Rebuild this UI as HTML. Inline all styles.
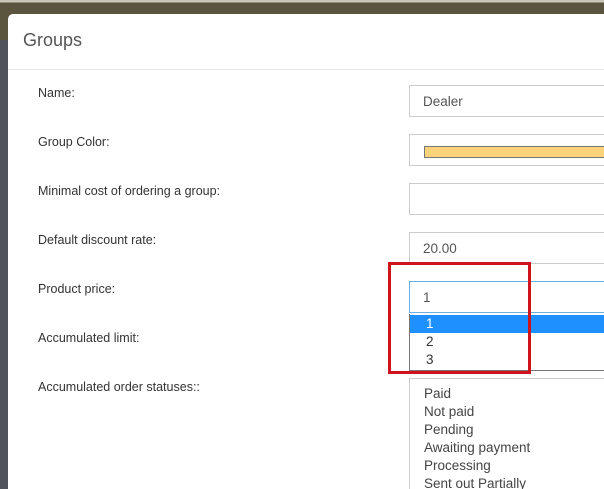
<!DOCTYPE html>
<html style="overflow:hidden;height:489px"><head><style>
body{margin:0;width:604px;height:489px;overflow:hidden;background:#50535a;font-family:"Liberation Sans",sans-serif;position:relative}
.top{position:absolute;left:0;top:0;width:604px;height:40px;background:linear-gradient(#c9c6b8 0,#c9c6b8 2px,#5b5540 3px,#5b5540 40px)}
.modal{position:absolute;left:8px;top:14px;width:596px;height:475px;background:#fff;border-radius:5px 0 0 0}
.title{position:absolute;left:23px;top:30px;font-size:18px;color:#555}
.hr{position:absolute;left:8px;top:69px;width:596px;height:1px;background:#e5e5e5}
.lbl{position:absolute;left:38px;font-size:12.5px;color:#333}
.in{position:absolute;left:409px;width:200px;height:32px;border:1px solid #ccc;box-sizing:border-box;font-size:13.5px;color:#555;padding:8px 13px}
.opt{position:absolute;left:410px;width:200px;height:18px;font-size:13.5px;color:#333;padding-left:16px;box-sizing:border-box;line-height:18px}
</style></head><body>
<div class="top"></div>
<div class="modal"></div>
<div class="title">Groups</div>
<div class="hr"></div>
<div class="lbl" style="top:86px">Name:</div>
<div class="lbl" style="top:135px">Group Color:</div>
<div class="lbl" style="top:184px">Minimal cost of ordering a group:</div>
<div class="lbl" style="top:233px">Default discount rate:</div>
<div class="lbl" style="top:282px">Product price:</div>
<div class="lbl" style="top:331px">Accumulated limit:</div>
<div class="lbl" style="top:380px">Accumulated order statuses::</div>
<div class="in" style="top:85px">Dealer</div>
<div class="in" style="top:134px"><div style="position:absolute;left:14px;top:11px;width:200px;height:10px;background:#f8d37a;border:1px solid #777"></div></div>
<div class="in" style="top:183px"></div>
<div class="in" style="top:232px">20.00</div>
<div class="in" style="top:281px;border-color:#66afe9">1</div>
<div style="position:absolute;left:409px;top:314px;width:200px;height:57px;border:1px solid #777;border-top:none;background:#fff;box-sizing:border-box"></div>
<div class="opt" style="top:315px;background:#1e90ff;color:#fff">1</div>
<div class="opt" style="top:333px">2</div>
<div class="opt" style="top:351px">3</div>
<div style="position:absolute;left:388px;top:262px;width:143px;height:112px;border:3px solid #d0141b;box-sizing:border-box"></div>
<div class="in" style="top:378px;height:120px;font-size:13.5px;line-height:18px;padding:6px 14px;color:#444">Paid<br>Not paid<br>Pending<br>Awaiting payment<br>Processing<br>Sent out Partially</div>
</body></html>
